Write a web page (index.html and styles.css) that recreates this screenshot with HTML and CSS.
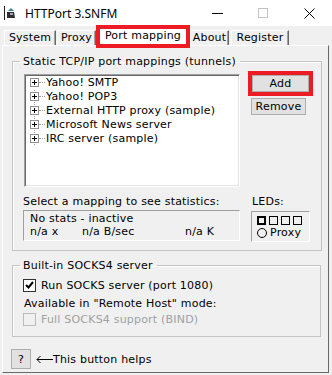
FILE: index.html
```html
<!DOCTYPE html>
<html lang="en">
<head>
  <meta charset="UTF-8">
  <title>HTTPort 3.SNFM</title>
  <link rel="stylesheet" href="styles.css">
</head>
<body>
  <div class="window">
    <!-- Title bar -->
    <div class="titlebar">
      <svg class="app-icon" width="12" height="14" viewBox="0 0 12 14">
        <rect x="0" y="0" width="1" height="14" fill="#202020"/>
        <path d="M3 6 L10 6 L11 12 L3 12 Z" fill="#303030"/>
        <path d="M4 5 L7 2 L10 5 Z" fill="#3a8a8a"/>
        <rect x="6" y="7" width="3" height="2" fill="#9ab"/>
      </svg>
      <span class="title">HTTPort 3.SNFM</span>
      <div class="caption-buttons">
        <span class="cap"><svg width="11" height="1"><rect width="11" height="1" fill="#000"/></svg></span>
        <span class="cap"><svg width="10" height="10"><rect x="0.5" y="0.5" width="9" height="9" fill="none" stroke="#c4c4c4"/></svg></span>
        <span class="cap"><svg width="11" height="11"><path d="M0.5 0.5 L10.5 10.5 M10.5 0.5 L0.5 10.5" stroke="#000" stroke-width="1"/></svg></span>
      </div>
    </div>

    <!-- Tabs -->
    <div class="tabs">
      <div class="tab tab-system">System</div>
      <div class="tab tab-proxy">Proxy</div>
      <div class="tab tab-active">Port mapping</div>
      <div class="tab tab-about">About</div>
      <div class="tab tab-register">Register</div>
    </div>

    <div class="panel">
      <fieldset class="group group-map">
        <legend>Static TCP/IP port mappings (tunnels)</legend>
        <div class="map-row">
          <ul class="tree">
            <li class="first"><span class="node"></span>Yahoo! SMTP</li>
            <li><span class="node"></span>Yahoo! POP3</li>
            <li><span class="node"></span>External HTTP proxy (sample)</li>
            <li><span class="node"></span>Microsoft News server</li>
            <li class="last"><span class="node"></span>IRC server (sample)</li>
          </ul>
          <div class="side-buttons">
            <button class="btn btn-add">Add</button>
            <button class="btn btn-remove">Remove</button>
          </div>
        </div>
        <div class="stats-row">
          <div class="stats-col">
            <div class="caption">Select a mapping to see statistics:</div>
            <div class="stats-box">
              <div>No stats - inactive</div>
              <div class="stats-line">
                <span class="s1">n/a x</span><span class="s2">n/a B/sec</span><span>n/a K</span>
              </div>
            </div>
          </div>
          <div class="leds-col">
            <div class="caption">LEDs:</div>
            <div class="led-box">
              <div class="leds">
                <span class="led on"></span><span class="led"></span><span class="led"></span><span class="led"></span>
              </div>
              <div class="led-proxy"><span class="radio"></span>Proxy</div>
            </div>
          </div>
        </div>
      </fieldset>

      <fieldset class="group group-socks">
        <legend>Built-in SOCKS4 server</legend>
        <label class="check-row">
          <span class="checkbox">
            <svg width="9" height="9" viewBox="0 0 9 9"><path d="M1 4 L3.5 6.5 L8 1" fill="none" stroke="#000" stroke-width="2"/></svg>
          </span>
          Run SOCKS server (port 1080)
        </label>
        <div class="note">Available in "Remote Host" mode:</div>
        <label class="check-row disabled">
          <span class="checkbox"></span>
          Full SOCKS4 support (BIND)
        </label>
      </fieldset>

      <div class="help-row">
        <button class="btn btn-help">?</button>
        <svg class="arrow" width="17" height="9" viewBox="0 0 17 9">
          <path d="M1 4.5 H17 M4.5 1 L1 4.5 L4.5 8" fill="none" stroke="#000" stroke-width="1"/>
        </svg>
        <span>This button helps</span>
      </div>
    </div>
  </div>
</body>
</html>
```

FILE: styles.css
```css
/* Window */
body {
  margin: 0;
  font-family: "DejaVu Sans", sans-serif;
  font-size: 11px;
  letter-spacing: 0.2px;
  color: #000;
  background: #f0f0f0;
}

.window {
  width: 332px;
  height: 375px;
  background: #f0f0f0;
  display: flex;
  flex-direction: column;
  overflow: hidden;
}

/* Title bar */
.titlebar {
  height: 26px;
  background: #fff;
  display: flex;
  align-items: center;
  flex-shrink: 0;
}

.app-icon {
  margin-left: 4px;
}

.title {
  margin-left: 9px;
  font-family: "Noto Sans", sans-serif;
  font-size: 12px;
  letter-spacing: 0;
}

.caption-buttons {
  margin-left: auto;
  display: flex;
}

.cap {
  width: 46px;
  height: 26px;
  display: flex;
  align-items: center;
  justify-content: center;
}

/* Tabs */
.tabs {
  height: 19px;
  display: flex;
  align-items: flex-end;
  padding-left: 4px;
  flex-shrink: 0;
}

.tab {
  box-sizing: border-box;
  height: 15px;
  line-height: 13px;
  text-align: center;
  border-top: 1px solid #fff;
  border-left: 1px solid #fff;
  border-right: 1px solid #696969;
  box-shadow: inset -1px 0 0 #a0a0a0;
}

.tab-system { width: 52px; margin-right: 1px; }
.tab-proxy { width: 39px; }
.tab-about { width: 39px; margin-right: 2px; }
.tab-register { width: 58px; }

.tab-active {
  position: relative;
  z-index: 1;
  width: 94px;
  height: 23px;
  margin-bottom: -3px;
  border: 4px solid #ed1c24;
  background: #fff;
  box-shadow: none;
  line-height: 13px;
}

/* Panel */
.panel {
  flex: 1;
  margin: 0 3px 2px 2px;
  border: 1px solid;
  border-color: #fff #696969 #696969 #fff;
  padding: 9px 7px 0 9px;
}

.group {
  margin: 0;
  border: 1px solid #c4c4c4;
  box-shadow: inset 1px 1px 0 #fff;
}

.group legend {
  margin-left: -4px;
  padding: 0 4px 0 3px;
  line-height: 13px;
}

.group-map {
  padding: 6px 11px 8px 11px;
}

.map-row {
  display: flex;
  align-items: flex-start;
}

/* Tree */
.tree {
  list-style: none;
  margin: 0;
  padding: 1px 0 0 1px;
  box-sizing: border-box;
  width: 216px;
  height: 113px;
  background: #fff;
  border: 1px solid;
  border-color: #a0a0a0 #fff #fff #a0a0a0;
  box-shadow: inset 1px 1px 0 #696969, inset -1px -1px 0 #e3e3e3;
}

.tree li {
  height: 14px;
  line-height: 14px;
  display: flex;
  align-items: center;
  white-space: nowrap;
}

.node {
  position: relative;
  width: 20px;
  height: 14px;
  flex-shrink: 0;
}

/* plus box */
.node::before {
  content: "";
  position: absolute;
  left: 4px;
  top: 2px;
  width: 7px;
  height: 7px;
  border: 1px solid #919191;
  background:
    linear-gradient(#000, #000) 1px 3px / 5px 1px no-repeat,
    linear-gradient(#000, #000) 3px 1px / 1px 5px no-repeat,
    #fff;
}

/* dotted connectors */
.node::after {
  content: "";
  position: absolute;
  left: 13px;
  top: 6px;
  width: 6px;
  border-top: 1px dotted #a0a0a0;
}

.tree li:not(.first) .node {
  background: linear-gradient(#a0a0a0 50%, transparent 50%) 8px 0 / 1px 2px repeat-y;
}

/* Side buttons */
.side-buttons {
  display: flex;
  flex-direction: column;
  margin-left: 12px;
  margin-top: 1px;
}

.btn {
  font-family: "DejaVu Sans", sans-serif;
  font-size: 11px;
  letter-spacing: 0.2px;
  background: #e1e1e1;
  border: 1px solid #adadad;
  padding: 0;
  color: #000;
  line-height: 13px;
}

.btn-add {
  width: 57px;
  height: 17px;
  outline: 4px solid #ed1c24;
  outline-offset: 0;
}

.btn-remove {
  width: 55px;
  height: 17px;
  margin-top: 6px;
  margin-left: -1px;
}

/* Stats */
.stats-row {
  display: flex;
  margin-top: 8px;
}

.caption {
  line-height: 13px;
}

.stats-col {
  margin-left: -1px;
  width: 217px;
}

.stats-box {
  box-sizing: border-box;
  height: 31px;
  margin-top: 2px;
  border: 1px solid;
  border-color: #a0a0a0 #fff #fff #a0a0a0;
  padding: 1px 0 0 6px;
  line-height: 13px;
}

.stats-line {
  display: flex;
}

.s1 { width: 52px; }
.s2 { width: 103px; }

.leds-col {
  margin-left: 12px;
}

.led-box {
  box-sizing: border-box;
  width: 59px;
  height: 31px;
  margin: 3px 0 0 -1px;
  border: 1px solid;
  border-color: #a0a0a0 #fff #fff #a0a0a0;
  padding: 4px 0 0 5px;
}

.leds {
  display: flex;
  gap: 3px;
}

.led {
  box-sizing: border-box;
  width: 9px;
  height: 9px;
  border: 1px solid #000;
}

.led.on {
  border-width: 2px;
}

.led-proxy {
  display: flex;
  align-items: center;
  height: 13px;
  margin-top: 1px;
}

.radio {
  box-sizing: border-box;
  width: 10px;
  height: 10px;
  border: 1px solid #000;
  border-radius: 50%;
  margin-right: 3px;
}

/* SOCKS group */
.group-socks {
  margin-top: 8px;
  padding: 5px 11px 9px 11px;
}

.check-row {
  display: flex;
  align-items: center;
  height: 16px;
  margin-left: -1px;
}

.checkbox {
  box-sizing: border-box;
  width: 13px;
  height: 13px;
  border: 1px solid #333;
  background: #fff;
  margin-right: 5px;
  display: flex;
  align-items: center;
  justify-content: center;
}

.note {
  margin-top: 4px;
  line-height: 13px;
}

.check-row.disabled {
  margin-top: 1px;
  color: #a0a0a0;
}

.check-row.disabled .checkbox {
  border-color: #bcbcbc;
  background: #f0f0f0;
}

/* Help */
.help-row {
  display: flex;
  align-items: center;
  margin-top: 12px;
  margin-left: -1px;
}

.btn-help {
  width: 20px;
  height: 20px;
}

.arrow {
  margin-left: 5px;
}
```
